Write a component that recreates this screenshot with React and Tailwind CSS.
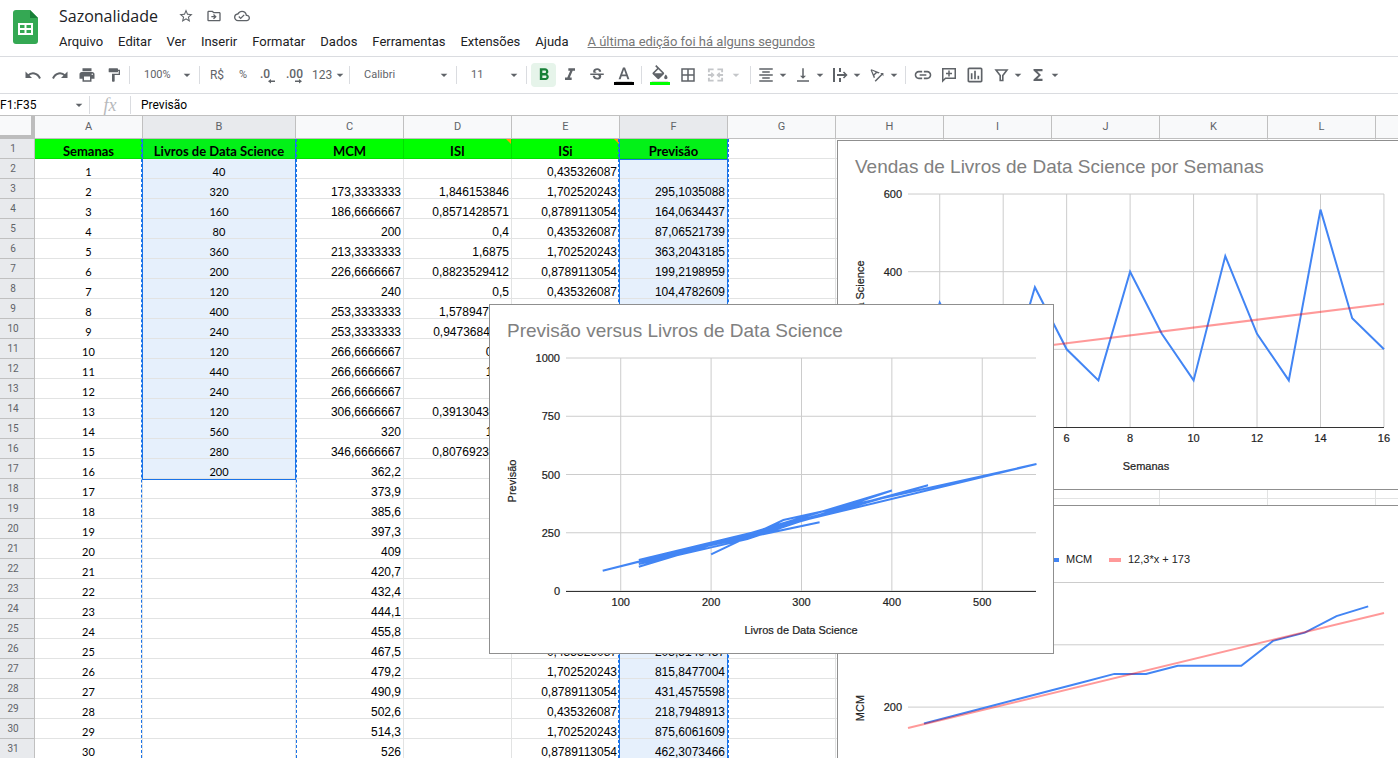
// src/App.jsx
import React, { useState } from 'react';
import {
  MdPrint,
  MdFormatPaint,
  MdFormatBold,
  MdFormatItalic,
  MdStrikethroughS,
  MdFormatColorText,
  MdFormatColorFill,
  MdBorderAll,
  MdFormatAlignCenter,
  MdVerticalAlignBottom,
  MdTextRotationAngleup,
  MdLink,
  MdOutlineInsertChart,
  MdFunctions,
  MdArrowDropDown,
  MdStarBorder,
  MdOutlineDriveFileMove,
  MdOutlineCloudDone,
} from 'react-icons/md';

const sales = [40, 320, 160, 80, 360, 200, 120, 400, 240, 120, 440, 240, 120, 560, 280, 200];
const seasonal = [0.43532608696, 1.7025202429, 0.8789113054];

// 3 week moving average, then the trend line once the sales run out
const movingAverage = (week) => {
  if (week === 1) return null;
  if (week < 16) return (sales[week - 2] + sales[week - 1] + sales[week]) / 3;
  return 11.7 * week + 175;
};

const weeks = Array.from({ length: 30 }, (_, i) => {
  const week = i + 1;
  const sold = sales[i];
  const mcm = movingAverage(week);
  const index = seasonal[i % 3];
  return {
    week,
    sold,
    mcm,
    isi: mcm && week < 16 ? sold / mcm : null,
    index,
    forecast: mcm ? mcm * index : null,
  };
});

const format = (value) =>
  value === null || value === undefined ? '' : String(Number(value.toPrecision(10))).replace('.', ',');

const columns = ['A', 'B', 'C', 'D', 'E', 'F', 'G', 'H', 'I', 'J', 'K', 'L'];
const emptyColumns = columns.slice(6);
const menus = ['Arquivo', 'Editar', 'Ver', 'Inserir', 'Formatar', 'Dados', 'Ferramentas', 'Extensões', 'Ajuda'];

const SheetsLogo = () => (
  <svg width="26" height="34" viewBox="0 0 26 34" aria-hidden="true">
    <path d="M3 0h14l8 8v23a3 3 0 0 1-3 3H3a3 3 0 0 1-3-3V3a3 3 0 0 1 3-3z" fill="#34a853" />
    <path d="M17 0l8 8h-8z" fill="#188038" />
    <path d="M5 13h15v12H5zM7 15v3h4.500v-3zM13.500 15v3H18v-3zM7 20v3h4.500v-3zM13.500 20v3H18v-3z" fill="#fff" fillRule="evenodd" />
  </svg>
);

const UndoIcon = ({ flip }) => (
  <svg width="18" height="18" viewBox="0 0 18 18" fill="none" stroke="currentColor" strokeWidth="2" aria-hidden="true">
    <g transform={flip ? 'matrix(-1 0 0 1 18 0)' : undefined}>
      <path d="M4 9.500C7.500 6 13.500 6.500 16 12.500" />
      <path d="M1.500 5.500v6.500H8z" fill="currentColor" stroke="none" />
    </g>
  </svg>
);

const MergeIcon = () => (
  <svg width="18" height="18" viewBox="0 0 18 18" fill="none" stroke="currentColor" strokeWidth="2" aria-hidden="true">
    <path d="M7 3H2v3M11 3h5v3M7 15H2v-3M11 15h5v-3M1 9h5M17 9h-5" />
    <path d="M4.500 6.500L7 9l-2.500 2.500M13.500 6.500L11 9l2.500 2.500" strokeWidth="1.500" />
  </svg>
);

const WrapIcon = () => (
  <svg width="18" height="18" viewBox="0 0 18 18" fill="none" stroke="currentColor" aria-hidden="true">
    <path d="M3 2v14M9 2v4M9 12v4M6 9h9" strokeWidth="2" />
    <path d="M12.500 6l3 3-3 3" strokeWidth="1.500" />
  </svg>
);

const CommentIcon = () => (
  <svg width="18" height="18" viewBox="0 0 18 18" fill="none" stroke="currentColor" strokeWidth="1.500" aria-hidden="true">
    <path d="M2.750 15V2.750h12.500v9.500H5.500z" />
    <path d="M9 4.500v6M6 7.500h6" />
  </svg>
);

const FilterIcon = () => (
  <svg width="18" height="18" viewBox="0 0 18 18" fill="none" stroke="currentColor" strokeWidth="1.600" aria-hidden="true">
    <path d="M4 4h11l-4.200 5.500v5H8.200v-5z" />
  </svg>
);

const DecimalIcon = ({ digits, grow }) => (
  <svg width="20" height="20" viewBox="0 0 20 20" aria-hidden="true">
    <text x="1" y="13" fontSize="12" fontWeight="500" fill="currentColor">{digits}</text>
    {grow ? (
      <path d="M10 15.500h4V14l3 2.250-3 2.250V17h-4z" fill="currentColor" />
    ) : (
      <path d="M16 15.500h-4V14l-3 2.250 3 2.250V17h4z" fill="currentColor" />
    )}
  </svg>
);

const ToolButton = ({ label, className = 'w-[27px]', children }) => (
  <button type="button" aria-label={label} className={`flex h-6 shrink-0 items-center justify-center ${className}`}>
    {children}
  </button>
);

const MenuButton = ({ label, className = '', children }) => (
  <button type="button" aria-label={label} className={`flex h-6 w-[37px] shrink-0 items-center ${className}`}>
    {children}
    <MdArrowDropDown size={16} className="shrink-0" />
  </button>
);

const Divider = ({ className = '' }) => <div className={`h-[18px] w-px shrink-0 bg-[#dadce0] ${className}`} />;

const ToolSelect = ({ label, options, className }) => (
  <div className={`relative flex shrink-0 items-center ${className}`}>
    <select aria-label={label} className="h-6 w-full appearance-none bg-transparent pl-[14px] text-[11px]">
      {options.map((option) => (
        <option key={option}>{option}</option>
      ))}
    </select>
    <MdArrowDropDown size={16} className="pointer-events-none absolute right-1" />
  </div>
);

const Header = () => (
  <header className="flex h-14 items-start gap-5 pt-[10px] pl-[13px]">
    <SheetsLogo />
    <div className="-mt-1">
      <div className="flex h-5 items-center">
        <h1 className="font-['Open_Sans'] text-[16px] leading-5 text-[#202124]">Sazonalidade</h1>
        <div className="ml-5 flex items-center gap-3 text-[#5f6368]">
          <button type="button" aria-label="Marcar com estrela"><MdStarBorder size={16} /></button>
          <button type="button" aria-label="Mover"><MdOutlineDriveFileMove size={16} /></button>
          <button type="button" aria-label="Status do documento"><MdOutlineCloudDone size={16} /></button>
        </div>
      </div>
      <nav className="mt-[6px] flex items-center gap-[15px] text-[13px] leading-5 text-[#202124]">
        {menus.map((menu) => (
          <button key={menu} type="button">{menu}</button>
        ))}
        <a href="#historico" className="ml-1 text-[#777] underline">A última edição foi há alguns segundos</a>
      </nav>
    </div>
  </header>
);

const Toolbar = () => (
  <div className="flex h-[38px] items-center overflow-hidden border-y border-[#dadce0] pl-[19px] text-[#5f6368]">
    <ToolButton label="Desfazer"><UndoIcon /></ToolButton>
    <ToolButton label="Refazer"><UndoIcon flip /></ToolButton>
    <ToolButton label="Imprimir"><MdPrint size={18} /></ToolButton>
    <ToolButton label="Pintar formatação"><MdFormatPaint size={16} /></ToolButton>
    <Divider className="ml-[2px]" />
    <ToolSelect label="Zoom" options={['100%', '75%', '50%']} className="w-[69px]" />
    <Divider className="mr-1" />
    <ToolButton label="Formatar como moeda" className="w-[26px]"><span className="text-[12px]">R$</span></ToolButton>
    <ToolButton label="Formatar como porcentagem" className="w-[26px]"><span className="text-[11px]">%</span></ToolButton>
    <ToolButton label="Diminuir casas decimais" className="w-[26px]"><DecimalIcon digits=".0" /></ToolButton>
    <ToolButton label="Aumentar casas decimais" className="w-[26px]"><DecimalIcon digits=".00" grow /></ToolButton>
    <MenuButton label="Mais formatos" className="ml-1"><span className="text-[12px]">123</span></MenuButton>
    <Divider />
    <ToolSelect label="Fonte" options={['Calibri', 'Arial', 'Roboto']} className="w-[106px]" />
    <Divider />
    <ToolSelect label="Tamanho da fonte" options={['11', '12', '14']} className="w-[69px]" />
    <Divider className="mr-1" />
    <ToolButton label="Negrito" className="w-[25px] rounded-sm bg-[#e6f4ea] text-[#188038]"><MdFormatBold size={20} /></ToolButton>
    <ToolButton label="Itálico"><MdFormatItalic size={20} /></ToolButton>
    <ToolButton label="Tachado"><MdStrikethroughS size={18} /></ToolButton>
    <ToolButton label="Cor do texto">
      <span className="flex flex-col items-center border-b-[3px] border-black">
        <span className="h-[17px] overflow-hidden"><MdFormatColorText size={20} /></span>
      </span>
    </ToolButton>
    <Divider className="mx-1" />
    <ToolButton label="Cor de preenchimento" className="w-7">
      <span className="flex flex-col items-center border-b-[3px] border-[#00ff00]">
        <span className="h-[17px] overflow-hidden"><MdFormatColorFill size={20} /></span>
      </span>
    </ToolButton>
    <ToolButton label="Bordas" className="w-7"><MdBorderAll size={18} /></ToolButton>
    <MenuButton label="Mesclar células" className="ml-[5px] gap-1 text-[#c4c6c9]"><MergeIcon /></MenuButton>
    <Divider className="mx-[6px]" />
    <MenuButton label="Alinhamento horizontal"><MdFormatAlignCenter size={18} /></MenuButton>
    <MenuButton label="Alinhamento vertical"><MdVerticalAlignBottom size={18} /></MenuButton>
    <MenuButton label="Ajuste de texto"><WrapIcon /></MenuButton>
    <MenuButton label="Rotação do texto"><MdTextRotationAngleup size={18} /></MenuButton>
    <Divider className="mr-1" />
    <ToolButton label="Inserir link" className="w-[26px]"><MdLink size={20} /></ToolButton>
    <ToolButton label="Inserir comentário" className="w-[26px]"><CommentIcon /></ToolButton>
    <ToolButton label="Inserir gráfico" className="w-[26px]"><MdOutlineInsertChart size={20} /></ToolButton>
    <MenuButton label="Criar filtro" className="ml-1"><FilterIcon /></MenuButton>
    <MenuButton label="Funções"><MdFunctions size={18} /></MenuButton>
  </div>
);

const FormulaBar = () => {
  const [range, setRange] = useState('F1:F35');
  const [formula, setFormula] = useState('Previsão');

  return (
    <div className="flex h-[21px] items-center text-[12px] text-black">
      <input
        aria-label="Intervalo"
        value={range}
        onChange={(e) => setRange(e.target.value)}
        className="w-[71px] outline-none"
      />
      <MdArrowDropDown size={16} className="mr-[2px] text-[#5f6368]" />
      <Divider />
      <span className="w-10 text-center font-['Liberation_Serif'] text-[18px] leading-5 text-[#b7b9bc] italic">fx</span>
      <Divider />
      <input
        aria-label="Fórmula"
        value={formula}
        onChange={(e) => setFormula(e.target.value)}
        className="min-w-0 flex-1 pl-[10px] outline-none"
      />
    </div>
  );
};

const cell = 'h-5 border-r border-b border-[#e2e3e3] px-[2px] align-bottom leading-3 whitespace-nowrap';
const titleCell = 'h-5 border-r border-b border-[#00e000] bg-[#00ff00] text-center align-bottom font-[Lato] text-[13px] leading-[14px] font-bold';
const selected = 'bg-[#e6f0fc] border-[#cbd8e8]';
const numeric = "text-right font-['Liberation_Sans'] text-[12px]";
const centered = 'text-center font-[Lato] text-[11px]';

const NoteMark = () => (
  <span className="absolute top-0 right-0 border-t-[5px] border-l-[5px] border-t-[#ff9900] border-l-transparent" />
);

const RowHeader = ({ children }) => (
  <th scope="row" className="h-5 border-r border-b border-[#c0c0c0] bg-[#e8eaed] pr-2 text-[10px] leading-3 font-normal text-[#5f6368]">
    {children}
  </th>
);

const Grid = () => (
  <table className="w-full table-fixed border-separate border-spacing-0 text-black">
    <colgroup>
      <col className="w-[35px]" />
      <col className="w-[108px]" />
      <col className="w-[153px]" />
      {columns.slice(2).map((name) => (
        <col key={name} className="w-[108px]" />
      ))}
      <col />
    </colgroup>
    <thead>
      <tr>
        <td className="h-[23px] border-r-4 border-b-4 border-[#bdbdbd] bg-[#f8f9fa]" />
        {columns.map((name) => (
          <th
            key={name}
            scope="col"
            className={`h-[23px] border-r border-b border-[#c0c0c0] text-[11px] leading-4 font-normal text-[#5f6368] ${
              name === 'B' || name === 'F' ? 'bg-[#e8eaed]' : 'bg-[#f8f9fa]'
            }`}
          >
            {name}
          </th>
        ))}
        <td className="border-b border-[#c0c0c0] bg-[#f8f9fa]" />
      </tr>
    </thead>
    <tbody>
      <tr>
        <RowHeader>1</RowHeader>
        <td className={titleCell}>Semanas</td>
        <td className={titleCell}><span className="block bg-[#1a73e8]/10 pt-[5px]">Livros de Data Science</span></td>
        <td className={titleCell}>MCM</td>
        <td className={`${titleCell} relative`}>ISI<NoteMark /></td>
        <td className={`${titleCell} relative`}>ISi<NoteMark /></td>
        <td className={titleCell}><span className="block bg-[#1a73e8]/10 pt-[5px]">Previsão</span></td>
        {emptyColumns.map((name) => (
          <td key={name} className={cell} />
        ))}
        <td className="border-b border-[#e2e3e3]" />
      </tr>
      {weeks.map((row) => (
        <tr key={row.week}>
          <RowHeader>{row.week + 1}</RowHeader>
          <td className={`${cell} ${centered}`}>{row.week}</td>
          <td className={`${cell} ${centered} ${row.sold ? selected : ''}`}>{row.sold}</td>
          <td className={`${cell} ${numeric}`}>{format(row.mcm)}</td>
          <td className={`${cell} ${numeric}`}>{format(row.isi)}</td>
          <td className={`${cell} ${numeric}`}>{format(row.index)}</td>
          <td className={`${cell} ${numeric} ${selected}`}>{format(row.forecast)}</td>
          {emptyColumns.map((name) => (
            <td key={name} className={cell} />
          ))}
          <td className="border-b border-[#e2e3e3]" />
        </tr>
      ))}
    </tbody>
  </table>
);

const Selection = () => (
  <div className="pointer-events-none">
    <div className="absolute top-[23px] bottom-0 left-[141px] w-[156px] border-x border-dashed border-[#1a73e8]" />
    <div className="absolute top-[23px] left-[142px] h-[341px] w-[154px] border-x border-b border-[#1a73e8]" />
    <div className="absolute top-[23px] bottom-0 left-[618px] w-[111px] border-x border-dashed border-[#1a73e8]" />
    <div className="absolute top-[23px] bottom-0 left-[619px] w-[109px] border-x border-[#1a73e8]" />
    <div className="absolute top-[23px] left-[619px] h-[21px] w-[109px] border-b border-[#1a73e8]" />
  </div>
);

const toPoints = (pairs) => pairs.map(([x, y]) => `${x.toFixed(1)},${y.toFixed(1)}`).join(' ');

const ChartFrame = ({ label, className, children }) => (
  <div className={`absolute h-[350px] w-[565px] border border-[#8f8f8f] bg-white ${className}`}>
    <svg role="img" aria-label={label} width="563" height="348" viewBox="0 0 563 348" fontFamily="Liberation Sans, sans-serif">
      {children}
    </svg>
  </div>
);

const ChartTitle = ({ children }) => (
  <text x="17" y="32" fontSize="19" fill="#808080">{children}</text>
);

const AxisText = ({ x, y, anchor = 'middle', vertical, children }) => (
  <text
    x={x}
    y={y}
    fontSize="11"
    fill="#222"
    stroke="#222"
    strokeWidth="0.2"
    textAnchor={anchor}
    transform={vertical ? `rotate(-90 ${x} ${y})` : undefined}
  >
    {children}
  </text>
);

const WeeklySalesChart = () => {
  const px = (week) => 70 + (week - 1) * 31.73;
  const py = (value) => 286 - value * 0.3883;
  return (
    <ChartFrame label="Vendas de Livros de Data Science por Semanas" className="top-[24px] left-[837px]">
      <ChartTitle>Vendas de Livros de Data Science por Semanas</ChartTitle>
      {[200, 400, 600].map((v) => (
        <g key={v}>
          <path d={`M70 ${py(v)}H546`} stroke="#ccc" />
          <AxisText x={64} y={py(v) + 4} anchor="end">{v}</AxisText>
        </g>
      ))}
      {[2, 4, 6, 8, 10, 12, 14, 16].map((w) => (
        <g key={w}>
          <path d={`M${px(w)} 53V286`} stroke="#ccc" />
          <AxisText x={px(w)} y={301}>{w}</AxisText>
        </g>
      ))}
      <path d="M70 286.500H546" stroke="#333" />
      <polyline points={toPoints(sales.map((v, i) => [px(i + 1), py(v)]))} fill="none" stroke="#4285f4" strokeWidth="2" />
      <path d="M70 222L546 163" stroke="#ff0000" strokeOpacity="0.4" strokeWidth="2" />
      <AxisText x={26} y={176} vertical>Livros de Data Science</AxisText>
      <AxisText x={308} y={329}>Semanas</AxisText>
    </ChartFrame>
  );
};

const MovingAverageChart = () => {
  const points = weeks.slice(1, 16).map((row, i) => [86 + i * 31.73, 201 - (row.mcm - 200) * 0.62]);
  return (
    <ChartFrame label="MCM" className="top-[389px] left-[837px]">
      {[400, 300, 200, 100].map((v, i) => (
        <g key={v}>
          <path d={`M70 ${76.5 + i * 62.3}H546`} stroke="#ccc" />
          {v === 200 && <AxisText x={64} y={205} anchor="end">{v}</AxisText>}
        </g>
      ))}
      <path d="M206 54h15" stroke="#4285f4" strokeWidth="4" />
      <text x="228" y="57" fontSize="11" fill="#222">MCM</text>
      <path d="M271 54h12" stroke="#ff9999" strokeWidth="4" />
      <text x="290" y="57" fontSize="11" fill="#222">12,3*x + 173</text>
      <polyline points={toPoints(points)} fill="none" stroke="#4285f4" strokeWidth="2" />
      <path d="M70 222L546 107" stroke="#ff0000" strokeOpacity="0.4" strokeWidth="2" />
      <AxisText x={26} y={202} vertical>MCM</AxisText>
    </ChartFrame>
  );
};

const ForecastChart = () => {
  const px = (value) => 76.5 + (value - 40) * 0.9038;
  const py = (value) => 286 - value * 0.233;
  return (
    <ChartFrame label="Previsão versus Livros de Data Science" className="top-[188px] left-[489px]">
      <ChartTitle>Previsão versus Livros de Data Science</ChartTitle>
      {[0, 250, 500, 750, 1000].map((v) => (
        <g key={v}>
          <path d={`M76 ${py(v)}H546`} stroke="#ccc" />
          <AxisText x={70} y={py(v) + 4} anchor="end">{v}</AxisText>
        </g>
      ))}
      {[100, 200, 300, 400, 500].map((v) => (
        <g key={v}>
          <path d={`M${px(v)} 53V286`} stroke="#ccc" />
          <AxisText x={px(v)} y={301}>{v}</AxisText>
        </g>
      ))}
      <path d="M76 286.500H546" stroke="#333" />
      <polyline
        points={toPoints(weeks.slice(1, 16).map((row) => [px(row.sold), py(row.forecast)]))}
        fill="none"
        stroke="#4285f4"
        strokeWidth="2"
      />
      <AxisText x={26} y={176} vertical>Previsão</AxisText>
      <AxisText x={311} y={329}>Livros de Data Science</AxisText>
    </ChartFrame>
  );
};

const App = () => (
  <div className="flex h-screen flex-col overflow-hidden bg-white font-[Roboto,sans-serif]">
    <Header />
    <Toolbar />
    <FormulaBar />
    <main className="relative min-h-0 flex-1 overflow-hidden border-t border-[#c0c0c0]">
      <Grid />
      <Selection />
      <WeeklySalesChart />
      <MovingAverageChart />
      <ForecastChart />
    </main>
  </div>
);

export default App;
